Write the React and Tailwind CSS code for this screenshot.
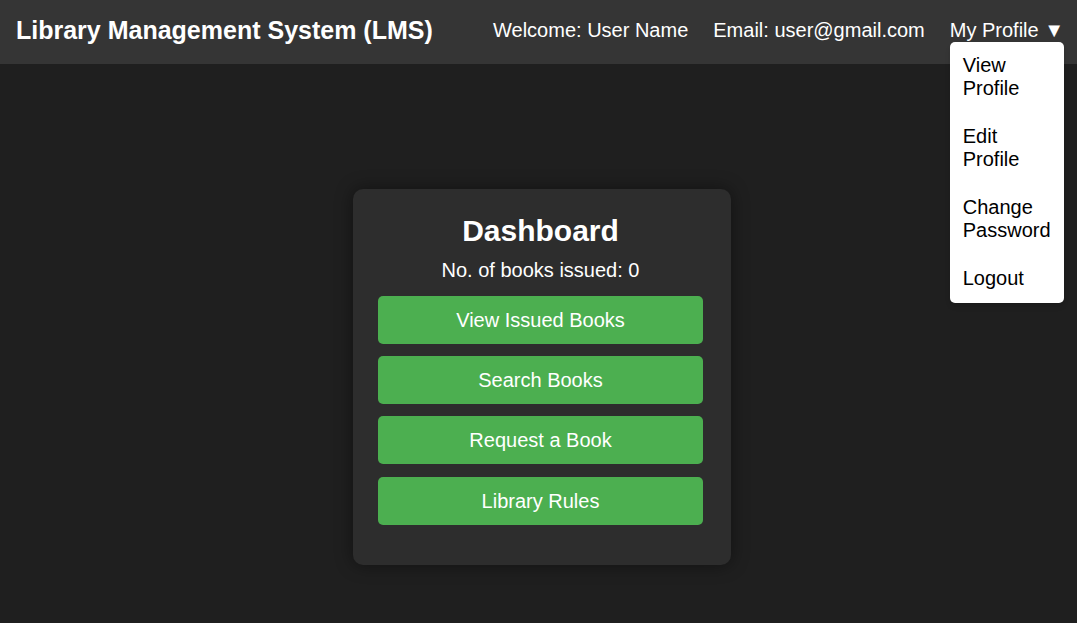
export default function App() {
  const buttons = ["View Issued Books", "Search Books", "Request a Book", "Library Rules"];
  return (
    <div className="min-h-[623px] bg-[#1f1f1f] text-white font-['Liberation_Sans',Arial,sans-serif]">
      <header className="h-16 bg-[#353535] flex items-center justify-between pl-4 pr-[13px] pb-1">
        <h1 className="text-[25px] font-bold leading-none">Library Management System (LMS)</h1>
        <nav className="flex items-center gap-[25px] text-[20px] leading-[23px]">
          <span>Welcome: User Name</span>
          <span>Email: user@gmail.com</span>
          <div className="relative">
            <span>My Profile ▼</span>
            <div className="absolute left-0 right-0 top-full bg-white text-black rounded-[5px] shadow-md z-10">
              {["View Profile", "Edit Profile", "Change Password", "Logout"].map((t) => (
                <div key={t} className="px-[13px] py-[12.5px] leading-[23px] text-[20px]">{t}</div>
              ))}
            </div>
          </div>
        </nav>
      </header>
      <main className="flex justify-center pt-[125px] pl-[7px]">
        <div className="w-[378px] bg-[#2d2d2d] rounded-[10px] shadow-[0_0_18px_rgba(0,0,0,0.45)] pt-[25px] pb-[40px] pl-[25px] pr-[28px] flex flex-col items-center">
          <h2 className="text-[30px] font-bold leading-[34px]">Dashboard</h2>
          <p className="text-[20px] leading-[23px] mt-[11px]">No. of books issued: 0</p>
          <div className="w-full flex flex-col gap-[12.4px] mt-[13.5px]">
            {buttons.map((b) => (
              <button key={b} className="h-[48px] w-full bg-[#4caf50] rounded-[5px] text-[20px] text-white">{b}</button>
            ))}
          </div>
        </div>
      </main>
    </div>
  );
}
